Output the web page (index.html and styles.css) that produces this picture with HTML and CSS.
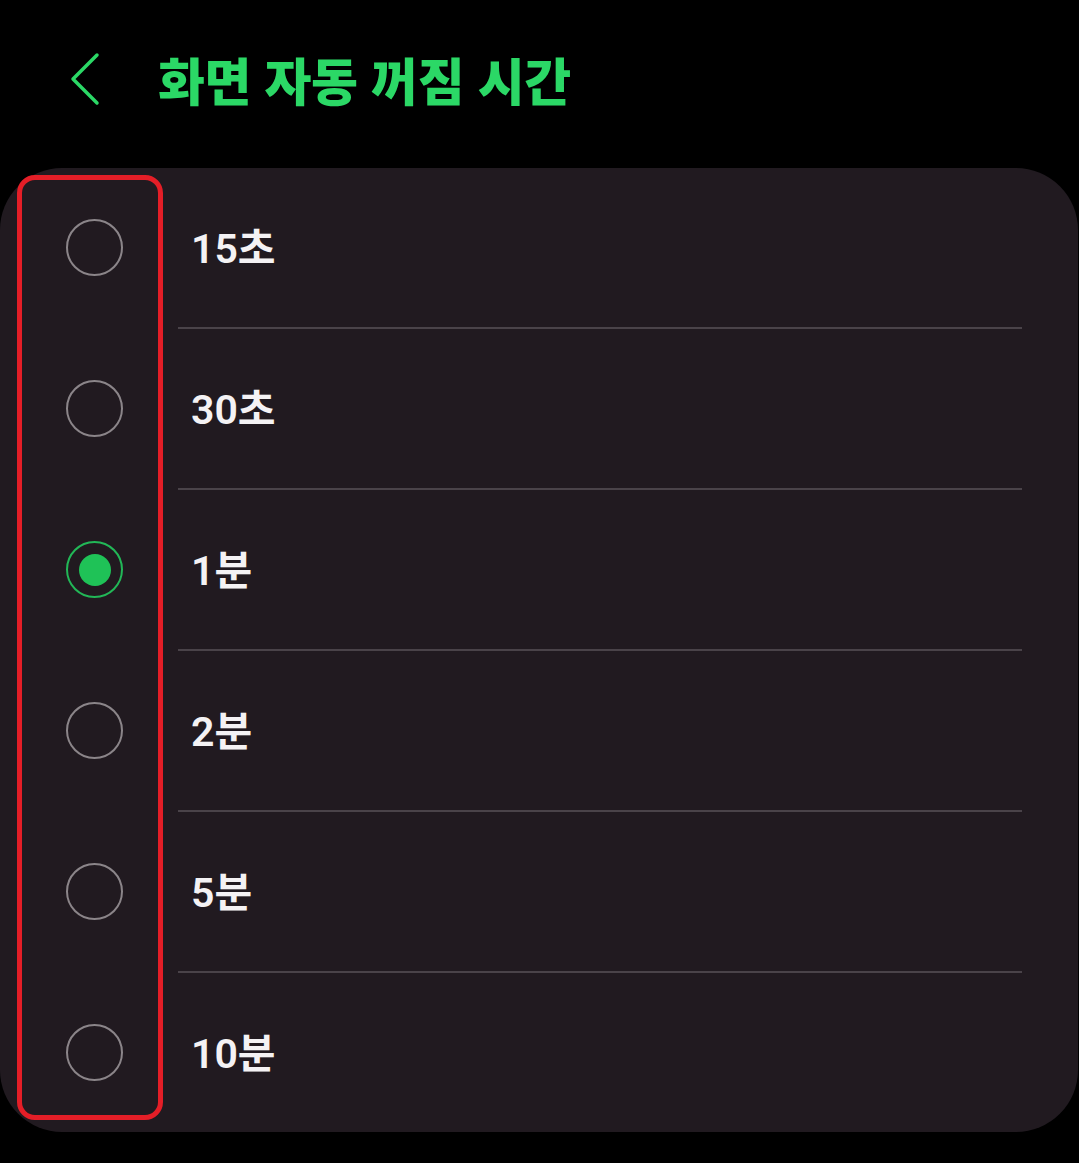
FILE: index.html
```html
<!DOCTYPE html>
<html lang="ko">
<head>
    <meta charset="UTF-8">
    <meta name="viewport" content="width=device-width, initial-scale=1.0">
    <title>화면 자동 꺼짐 시간</title>
    <link rel="stylesheet" href="styles.css">
</head>
<body>

<div class="header">
    <svg class="back" width="40" height="60" viewBox="0 0 40 60">
        <path d="M30 6 L6 30 L30 54" fill="none" stroke="#2bd866" stroke-width="3.5" stroke-linecap="round" stroke-linejoin="round"/>
    </svg>
    <h1 class="title">화면 자동 꺼짐 시간</h1>
</div>

<div class="card">
    <div class="option">
        <span class="radio"></span>
        <span class="label">15초</span>
    </div>
    <div class="option">
        <span class="radio"></span>
        <span class="label">30초</span>
    </div>
    <div class="option">
        <span class="radio checked"></span>
        <span class="label">1분</span>
    </div>
    <div class="option">
        <span class="radio"></span>
        <span class="label">2분</span>
    </div>
    <div class="option">
        <span class="radio"></span>
        <span class="label">5분</span>
    </div>
    <div class="option">
        <span class="radio"></span>
        <span class="label">10분</span>
    </div>

    <!-- annotation box around the radio column -->
    <div class="highlight"></div>
</div>

</body>
</html>
```

FILE: styles.css
```css
body {
    margin: 0;
    background: #000;
    font-family: Roboto, "Noto Sans CJK KR", sans-serif;
    width: 1079px;
    height: 1163px;
    overflow: hidden;
}

.header {
    display: flex;
    align-items: center;
    height: 168px;
    padding-left: 67px;
    box-sizing: border-box;
    padding-bottom: 10px;
}

.back {
    display: block;
}

.title {
    margin: 0 0 0 51px;
    color: #2bd866;
    font-family: "Noto Sans CJK KR", sans-serif;
    font-size: 51px;
    font-weight: 900;
    letter-spacing: -0.5px;
}

.card {
    position: relative;
    width: 1078px;
    background: #211a20;
    border-radius: 62px;
}

.option {
    display: flex;
    align-items: center;
    height: 159px;
    padding-left: 66px;
    position: relative;
}

.option + .option::before {
    content: "";
    position: absolute;
    top: -2px;
    left: 178px;
    width: 844px;
    height: 2px;
    background: #4a4349;
}

.option + .option {
    margin-top: 2px;
}

.radio {
    width: 53px;
    height: 53px;
    border: 2.5px solid #8b8589;
    border-radius: 50%;
    display: flex;
    justify-content: center;
    align-items: center;
    flex-shrink: 0;
}

.radio.checked {
    border-color: #22b757;
}

.radio.checked::after {
    content: "";
    width: 32px;
    height: 32px;
    border-radius: 50%;
    background: #1fc257;
}

.label {
    margin-left: 68px;
    padding-bottom: 6px;
    color: #f4f2f4;
    font-size: 41px;
    font-weight: 600;
}

.highlight {
    position: absolute;
    top: 7px;
    left: 17px;
    width: 136px;
    height: 935px;
    border: 5.5px solid #e41e27;
    border-radius: 18px;
}
```
